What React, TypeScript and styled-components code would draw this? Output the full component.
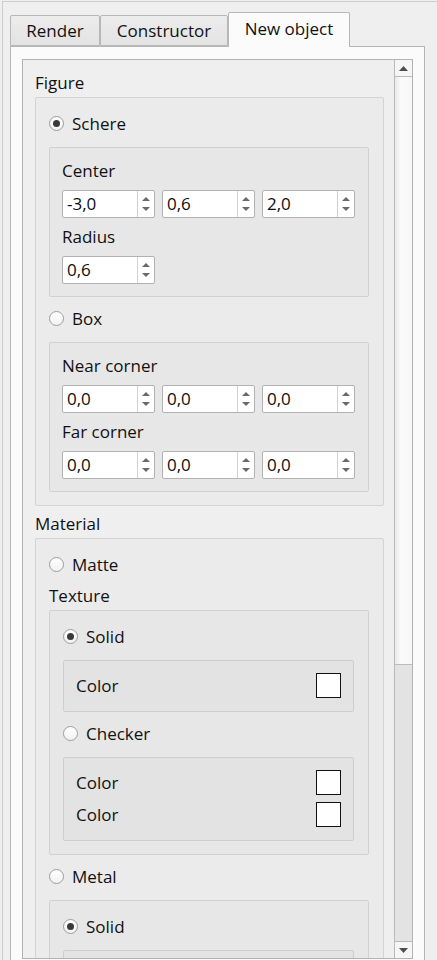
import React from 'react';
import styled, { createGlobalStyle, css } from 'styled-components';

const Global = createGlobalStyle`
  html, body { margin: 0; padding: 0; background: #efefef; }
  body {
    font-family: "Open Sans", "Noto Sans", sans-serif;
    font-size: 17px;
    color: #111111;
    overflow: hidden;
  }
`;

const Window = styled.div`
  box-sizing: border-box;
  width: 435px;
  height: 959px;
  margin: 1px 0 0 2px;
  padding: 10px 0 0 7px;
  border-top: 1px solid #cdcdcd;
  border-left: 1px solid #cdcdcd;
  overflow: hidden;
`;

const TabBar = styled.div`
  display: flex;
  align-items: flex-end;
  height: 34px;
  position: relative;
  z-index: 1;
`;

const Tab = styled.div<{ $w: number; $active?: boolean }>`
  box-sizing: border-box;
  width: ${(p) => p.$w}px;
  height: ${(p) => (p.$active ? 35 : 31)}px;
  margin-bottom: ${(p) => (p.$active ? -1 : 0)}px;
  border: 1px solid #b7b7b7;
  border-bottom: ${(p) => (p.$active ? 'none' : '1px solid #b7b7b7')};
  border-radius: 2px 2px 0 0;
  display: flex;
  align-items: center;
  justify-content: center;
  padding-bottom: ${(p) => (p.$active ? 3 : 0)}px;
  background: ${(p) =>
    p.$active ? '#fbfbfb' : 'linear-gradient(to bottom, #ececec, #e3e3e3)'};
  color: #111111;
  white-space: nowrap;
`;

const Pane = styled.div`
  box-sizing: border-box;
  width: 415px;
  height: 920px;
  border: 1px solid #b5b5b5;
  background: #fbfbfb;
  padding: 12px 11px 0 11px;
`;

const ScrollArea = styled.div`
  box-sizing: border-box;
  display: flex;
  height: 900px;
  border: 1px solid #b3b3b3;
`;

const Viewport = styled.div`
  flex: 1;
  overflow: hidden;
  background: #efefef;
  padding: 13px 10px 0 12px;
  display: flex;
  flex-direction: column;
`;

const Scrollbar = styled.div`
  box-sizing: border-box;
  width: 18px;
  border-left: 1px solid #b9b9b9;
  display: flex;
  flex-direction: column;
  background: #e3e3e3;
`;

const ArrowButton = styled.div<{ $down?: boolean }>`
  height: 17px;
  flex: none;
  box-sizing: border-box;
  display: flex;
  align-items: center;
  justify-content: center;
  background: #f6f6f6;
  ${(p) =>
    p.$down
      ? css`border-top: 1px solid #b9b9b9;`
      : css`border-bottom: 1px solid #b9b9b9;`}
`;

const Handle = styled.div`
  height: 588px;
  flex: none;
  box-sizing: border-box;
  border-bottom: 1px solid #bcbcbc;
  background: linear-gradient(to right, #e9e9e9 0%, #fbfbfb 35%, #f7f7f7 100%);
`;

const Groove = styled.div`
  flex: 1;
`;

const Section = styled.div`
  display: flex;
  flex-direction: column;
  & + & {
    margin-top: 8px;
  }
`;

const Title = styled.div`
  height: 20px;
  line-height: 20px;
  margin-bottom: 4px;
`;

const levelBg = ['#ebebeb', '#e7e7e7', '#e3e3e3'];
const levelBorder = ['#d4d4d4', '#d1d1d1', '#cecece'];

const Frame = styled.div<{ $level: number; $pad?: string }>`
  box-sizing: border-box;
  display: flex;
  flex-direction: column;
  border: 1px solid ${(p) => levelBorder[p.$level]};
  border-radius: 2px;
  background: ${(p) => levelBg[p.$level]};
  padding: ${(p) => p.$pad ?? '15px 14px 13px 13px'};
`;

const RadioRow = styled.div`
  display: flex;
  align-items: center;
  height: 20px;
  gap: 8px;
  ${Frame} + & {
    margin-top: 11px;
  }
  & + ${Frame} {
    margin-top: 14px;
  }
`;

const RadioDot = styled.span<{ $checked?: boolean }>`
  box-sizing: border-box;
  width: 15px;
  height: 15px;
  border-radius: 50%;
  border: 1px solid #9d9d9d;
  background: linear-gradient(to bottom, #ffffff, #f2f2f2);
  display: flex;
  align-items: center;
  justify-content: center;
  &::after {
    content: '';
    display: ${(p) => (p.$checked ? 'block' : 'none')};
    width: 7px;
    height: 7px;
    border-radius: 50%;
    background: #3a3a3a;
  }
`;

const Label = styled.div<{ $gap?: number }>`
  height: 20px;
  line-height: 20px;
  margin-top: ${(p) => p.$gap ?? 0}px;
  & + ${Frame} {
    margin-top: 4px;
  }
`;

const SpinRow = styled.div`
  display: flex;
  gap: 7px;
  margin-top: 8px;
  & + ${Label} {
    margin-top: 9px;
  }
  ${Label} + & {
    margin-top: 9px;
  }
`;

const Spin = styled.div`
  box-sizing: border-box;
  width: 93px;
  height: 28px;
  display: flex;
  border: 1px solid #b2b2b2;
  border-radius: 2px;
  background: #ffffff;
`;

const SpinValue = styled.div`
  flex: 1;
  padding-left: 4px;
  line-height: 26px;
  color: #0d0d0d;
`;

const SpinButtons = styled.div`
  width: 16px;
  border-left: 1px solid #d2d2d2;
  display: flex;
  flex-direction: column;
  align-items: center;
  justify-content: center;
  gap: 6px;
`;

const ColorRow = styled.div`
  display: flex;
  align-items: center;
  justify-content: space-between;
  height: 25px;
  & + & {
    margin-top: 7px;
  }
`;

const Swatch = styled.div`
  box-sizing: border-box;
  width: 25px;
  height: 25px;
  border: 1px solid #111;
  background: #ffffff;
`;

const Tri = ({ down, w, h, color }: { down?: boolean; w: number; h: number; color: string }) => (
  <svg width={w} height={h} viewBox={`0 0 ${w} ${h}`} style={{ display: 'block' }}>
    <polygon
      points={down ? `0,0 ${w},0 ${w / 2},${h}` : `0,${h} ${w},${h} ${w / 2},0`}
      fill={color}
    />
  </svg>
);

const SpinBox = ({ value }: { value: string }) => (
  <Spin>
    <SpinValue>{value}</SpinValue>
    <SpinButtons>
      <Tri w={8} h={4} color="#6a6a6a" />
      <Tri down w={8} h={4} color="#6a6a6a" />
    </SpinButtons>
  </Spin>
);

const Radio = ({ label, checked }: { label: string; checked?: boolean }) => (
  <RadioRow>
    <RadioDot $checked={checked} />
    <span>{label}</span>
  </RadioRow>
);

const Triple = ({ values }: { values: string[] }) => (
  <SpinRow>
    {values.map((v, i) => (
      <SpinBox key={i} value={v} />
    ))}
  </SpinRow>
);

const ColorFrame = ({ count }: { count: number }) => (
  <Frame $level={2} $pad="12px 12px 13px 12px">
    {Array.from({ length: count }).map((_, i) => (
      <ColorRow key={i}>
        <span>Color</span>
        <Swatch />
      </ColorRow>
    ))}
  </Frame>
);

const TextureFrame = ({ full }: { full?: boolean }) => (
  <Frame $level={1} $pad="15px 14px 13px 13px">
    <Radio label="Solid" checked />
    {full ? (
      <>
        <ColorFrame count={1} />
        <Radio label="Checker" />
        <ColorFrame count={2} />
      </>
    ) : (
      <Frame $level={2} $pad="0" style={{ height: 52 }} />
    )}
  </Frame>
);

export default function App() {
  return (
    <>
      <Global />
      <Window>
        <TabBar>
          <Tab $w={90}>Render</Tab>
          <Tab $w={128}>Constructor</Tab>
          <Tab $w={122} $active>
            New object
          </Tab>
        </TabBar>
        <Pane>
          <ScrollArea>
            <Viewport>
              <Section>
                <Title>Figure</Title>
                <Frame $level={0}>
                  <Radio label="Schere" checked />
                  <Frame $level={1} $pad="13px 12px 12px 12px">
                    <Label>Center</Label>
                    <Triple values={['-3,0', '0,6', '2,0']} />
                    <Label>Radius</Label>
                    <SpinRow>
                      <SpinBox value="0,6" />
                    </SpinRow>
                  </Frame>
                  <Radio label="Box" />
                  <Frame $level={1} $pad="13px 12px 12px 12px">
                    <Label>Near corner</Label>
                    <Triple values={['0,0', '0,0', '0,0']} />
                    <Label>Far corner</Label>
                    <Triple values={['0,0', '0,0', '0,0']} />
                  </Frame>
                </Frame>
              </Section>
              <Section>
                <Title>Material</Title>
                <Frame $level={0}>
                  <Radio label="Matte" />
                  <Label $gap={12}>Texture</Label>
                  <TextureFrame full />
                  <Radio label="Metal" />
                  <TextureFrame />
                </Frame>
              </Section>
            </Viewport>
            <Scrollbar>
              <ArrowButton>
                <Tri w={9} h={5} color="#4e4e4e" />
              </ArrowButton>
              <Handle />
              <Groove />
              <ArrowButton $down>
                <Tri down w={9} h={5} color="#4e4e4e" />
              </ArrowButton>
            </Scrollbar>
          </ScrollArea>
        </Pane>
      </Window>
    </>
  );
}
